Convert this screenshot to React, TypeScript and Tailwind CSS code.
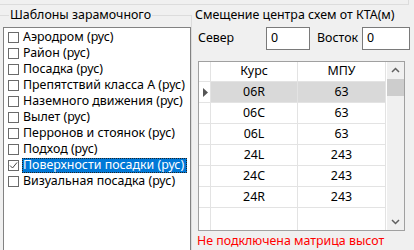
import React from 'react';

const templates = [
    'Аэродром (рус)',
    'Район (рус)',
    'Посадка (рус)',
    'Препятствий класса А (рус)',
    'Наземного движения (рус)',
    'Вылет (рус)',
    'Перронов и стоянок (рус)',
    'Подход (рус)',
    'Поверхности посадки (рус)',
    'Визуальная посадка (рус)',
];

const rows = [
    { course: '06R', mpu: '63' },
    { course: '06C', mpu: '63' },
    { course: '06L', mpu: '63' },
    { course: '24L', mpu: '243' },
    { course: '24C', mpu: '243' },
    { course: '24R', mpu: '243' },
];

const SELECTED = 8;

const CheckItem: React.FC<{ label: string; checked: boolean; selected: boolean }> = ({ label, checked, selected }) => (
    <div className="flex items-center h-[16px] pl-[4px]">
        <span className="w-[11px] h-[11px] border border-[#6a6a6a] bg-white flex items-center justify-center shrink-0">
            {checked && (
                <svg width="9" height="9" viewBox="0 0 9 9">
                    <path d="M1 4.5 L3.5 7 L8 1.5" fill="none" stroke="#444" strokeWidth="1" />
                </svg>
            )}
        </span>
        <span
            className={
                selected
                    ? 'ml-[3px] pl-[1px] pr-[3px] h-[15px] flex items-center bg-[#0078d7] text-white outline-1 outline-dotted outline-[#222] -outline-offset-1'
                    : 'ml-[3px] pl-[1px] pr-[3px] h-[15px] flex items-center text-black'
            }
        >
            {label}
        </span>
    </div>
);

const App: React.FC = () => {
    return (
        <div className="w-[414px] h-[250px] bg-[#f0f0f0] overflow-hidden text-[12.4px] leading-none text-black font-['Noto_Sans',sans-serif]">
            <div className="h-[5px] w-[409px] border-b border-r border-[#dcdcdc]" />
            <div className="flex">
                {/* left group */}
                <div className="w-[193px] shrink-0 relative">
                    <div className="absolute left-0 right-[1px] top-[10px] h-[300px] border-t border-r border-[#dcdcdc]" />
                    <div className="relative flex">
                        <span className="ml-[9px] px-[1px] mt-[4px] h-[14px] bg-[#f0f0f0]">Шаблоны зарамочного</span>
                    </div>
                    <div className="relative ml-[3px] mt-[4px] w-[188px] h-[240px] bg-white border border-[#828282] pt-[1px]">
                        {templates.map((t, i) => (
                            <CheckItem key={t} label={t} checked={i === SELECTED} selected={i === SELECTED} />
                        ))}
                    </div>
                </div>
                {/* right group */}
                <div className="flex-1 flex flex-col">
                    <span className="ml-[2px] mt-[4px] h-[14px]">Смещение центра схем от КТА(м)</span>
                    <div className="flex items-center mt-[4px] h-[23px]">
                        <span className="ml-[5px] w-[68px]">Север</span>
                        <div className="w-[44px] h-[23px] bg-white border border-[#7a7a7a] flex items-center pl-[4px]">0</div>
                        <span className="ml-[7px] w-[45px]">Восток</span>
                        <div className="w-[48px] h-[23px] bg-white border border-[#7a7a7a] flex items-center pl-[4px]">0</div>
                    </div>
                    <div className="ml-[5px] mt-[11px] w-[207px] h-[170px] border border-[#a0a0a0] bg-white flex">
                        <div className="w-[187px] flex flex-col">
                            <div className="flex h-[20px] border-b border-[#e3e3e3]">
                                <div className="w-[12px] border-r border-[#e3e3e3]" />
                                <div className="w-[87px] border-r border-[#e3e3e3] flex items-center justify-center">Курс</div>
                                <div className="flex-1 border-r border-[#e3e3e3] flex items-center justify-center">МПУ</div>
                            </div>
                            {rows.map((r, i) => (
                                <div key={r.course} className="flex h-[21px] border-b border-[#e3e3e3]">
                                    <div className="w-[12px] border-r border-[#e3e3e3] flex items-center pl-[4px]">
                                        {i === 0 && (
                                            <svg width="5" height="9" viewBox="0 0 5 9">
                                                <path d="M0 0 L5 4.5 L0 9 Z" fill="#555" />
                                            </svg>
                                        )}
                                    </div>
                                    <div className={`w-[87px] border-r border-[#e3e3e3] flex items-center justify-center ${i === 0 ? 'bg-[#d9d9d9]' : ''}`}>{r.course}</div>
                                    <div className={`flex-1 border-r border-[#e3e3e3] flex items-center justify-center ${i === 0 ? 'bg-[#d9d9d9]' : ''}`}>{r.mpu}</div>
                                </div>
                            ))}
                            <div className="flex flex-1">
                                <div className="w-[12px] border-r border-[#e3e3e3]" />
                                <div className="w-[87px] border-r border-[#e3e3e3]" />
                                <div className="flex-1 border-r border-[#e3e3e3]" />
                            </div>
                        </div>
                        <div className="ml-[1px] w-[17px] bg-[#f0f0f0] flex flex-col items-center">
                            <svg width="17" height="17" viewBox="0 0 17 17">
                                <path d="M5 10 L8.5 6.5 L12 10" fill="none" stroke="#606060" strokeWidth="1.5" />
                            </svg>
                            <div className="w-[17px] h-[17px] bg-[#cdcdcd]" />
                            <div className="flex-1" />
                            <svg width="17" height="17" viewBox="0 0 17 17">
                                <path d="M5 7 L8.5 10.5 L12 7" fill="none" stroke="#606060" strokeWidth="1.5" />
                            </svg>
                        </div>
                    </div>
                    <span className="ml-[4px] mt-[4px] text-[#ff0000]">Не подключена матрица высот</span>
                </div>
            </div>
        </div>
    );
};

export default App;
